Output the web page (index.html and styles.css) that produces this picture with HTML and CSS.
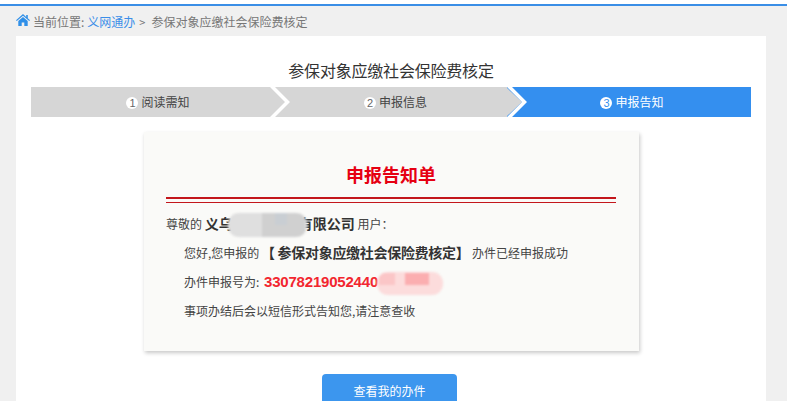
FILE: index.html
```html
<!DOCTYPE html>
<html lang="zh-CN">
<head>
<meta charset="utf-8">
<title>申报告知单</title>
<link rel="stylesheet" href="styles.css">
</head>
<body>
<div class="topline"></div>
<nav class="crumbs">
  <svg class="home" viewBox="0 0 14 12" aria-hidden="true"><path d="M7 0 0 6.2l.8.9L7 1.8l6.2 5.3.8-.9-2.2-1.9V1h-1.6v1.9L7 0Z"/><path d="M7 3 2.3 7v5h3.4V8.6h2.6V12h3.4V7L7 3Z"/></svg>
  <span>当前位置:</span><a class="crumb-link">义网通办</a><span class="sep">&gt;</span><span>参保对象应缴社会保险费核定</span>
</nav>
<main class="panel">
  <h1 class="title">参保对象应缴社会保险费核定</h1>
  <ol class="steps">
    <li class="step step-a"><span class="num">1</span>阅读需知</li>
    <li class="step step-b"><span class="num">2</span>申报信息</li>
    <li class="step step-c active"><span class="num">3</span>申报告知</li>
  </ol>
  <section class="card">
    <h2 class="card-title">申报告知单</h2>
    <div class="rule"></div>
    <p class="row first">尊敬的 <b class="company">义乌<i class="blur blur-dark"></i>有限公司</b> 用户：</p>
    <p class="row">您好,您申报的 <b class="item">【 参保对象应缴社会保险费核定】</b> 办件已经申报成功</p>
    <p class="row">办件申报号为: <b class="code">33078219052440<i class="blur blur-red"></i></b></p>
    <p class="row">事项办结后会以短信形式告知您,请注意查收</p>
  </section>
  <div class="actions"><a class="btn">查看我的办件</a></div>
</main>
</body>
</html>
```

FILE: styles.css
```css
* { box-sizing: border-box; }
html, body { margin: 0; height: 401px; overflow: hidden; }
body {
  background: #f0f0f0;
  font-family: "Noto Sans CJK SC", "Liberation Sans", sans-serif;
  color: #444;
  font-size: 12px;
  padding-top: 4px;
  position: relative;
}
body::before {
  content: "";
  position: absolute;
  inset: 0 0 auto 0;
  height: 4px;
  background: #fff;
}
.topline { height: 2px; background: #3a8ee6; }
.crumbs {
  height: 30px;
  padding: 1px 0 0 16px;
  display: flex;
  align-items: center;
  color: #777;
  line-height: 16px;
}
.home { width: 14px; height: 12px; margin-right: 3px; margin-top: -3px; fill: #2f8fe8; }
.crumb-link { color: #3b8ee8; margin-left: 3px; }
.sep { margin: 0 6px 0 4px; font-size: 11px; }
.panel {
  margin: 0 21px 0 16px;
  background: #fff;
  height: 365px;
  padding: 20px 15px 0;
}
.title {
  margin: 0;
  height: 31px;
  text-align: center;
  font-size: 16px;
  font-weight: 400;
  line-height: 28px;
  letter-spacing: -.2px;
  color: #333;
}
.steps {
  list-style: none;
  margin: 0;
  padding: 0;
  display: flex;
  height: 30px;
  line-height: 30px;
  background: #d6d6d6;
  color: #444;
}
.step { position: relative; text-align: center; }
.step-a { width: 239px; padding-left: 15px; }
.step-b { width: 237px; padding-left: 14px; }
.step-c { flex: 1; padding-left: 6px; background: #348fef; color: #fff; }
.step-a::after, .step-b::after {
  content: "";
  position: absolute;
  top: 0;
  right: -20px;
  width: 20px;
  height: 30px;
  background: #fff;
  clip-path: polygon(0 0, 5px 0, 20px 50%, 5px 100%, 0 100%, 15px 50%);
  z-index: 2;
}
.step-b::before {
  content: "";
  position: absolute;
  top: 0;
  right: -15px;
  width: 16px;
  height: 30px;
  background: #d6d6d6;
  clip-path: polygon(0 0, 100% 50%, 0 100%);
  z-index: 1;
}
.num {
  display: inline-block;
  width: 12px;
  height: 12px;
  margin-right: 3px;
  border-radius: 50%;
  background: #fff;
  color: #666;
  font-family: "Liberation Sans", sans-serif;
  font-size: 11px;
  line-height: 12px;
  vertical-align: 0;
}
.active .num { color: #348fef; }
.card {
  width: 495px;
  height: 219px;
  margin: 15px auto 0 113px;
  padding: 0 23px 0 22px;
  background: #fafaf8;
  box-shadow: 1px 2px 4px rgba(0, 0, 0, .22);
}
.card-title {
  margin: 0;
  padding-top: 28px;
  text-align: center;
  color: #e60012;
  font-size: 18px;
  line-height: 28px;
  font-weight: 700;
  height: 65px;
}
.rule { height: 6px; border-top: 2px solid #c3161c; border-bottom: 1px solid #c3161c; }
.row { margin: 0 0 0 18px; height: 29px; line-height: 29px; color: #444; white-space: nowrap; }
.row.first { margin: 6px 0 0; }
.company, .item { color: #333; font-size: 14px; }
.item { letter-spacing: -.3px; margin-left: -1px; }
.code { color: #f2262f; font-family: "Liberation Sans", sans-serif; font-size: 15px; letter-spacing: -.2px; margin-left: 2px; }
.blur { display: inline-block; vertical-align: middle; border-radius: 11px; filter: blur(.8px); }
.blur-dark {
  width: 79px;
  height: 24px;
  margin: -4px -8px -4px -5px;
  position: relative;
  background:
    linear-gradient(#c9ced3, #c9ced3) 47px 0 / 12px 12px no-repeat,
    linear-gradient(#d0d0d0, #d0d0d0) 34px 0 / 43px 24px no-repeat,
    #dfdfdf;
}
.blur-red {
  width: 66px;
  height: 23px;
  margin: -4px 0 -4px -1px;
  position: relative;
  background:
    linear-gradient(#fbaeb0, #fbaeb0) 28px 1px / 24px 12px no-repeat,
    linear-gradient(#fbc6c7, #fbc6c7) 2px 1px / 16px 12px no-repeat,
    #fcdcdc;
}
.actions { margin: 23px 0 0 291px; }
.btn {
  display: block;
  width: 135px;
  height: 36px;
  border-radius: 4px 4px 0 0;
  background: #3c96ee;
  color: #fff;
  text-align: center;
  line-height: 34px;
}
```
